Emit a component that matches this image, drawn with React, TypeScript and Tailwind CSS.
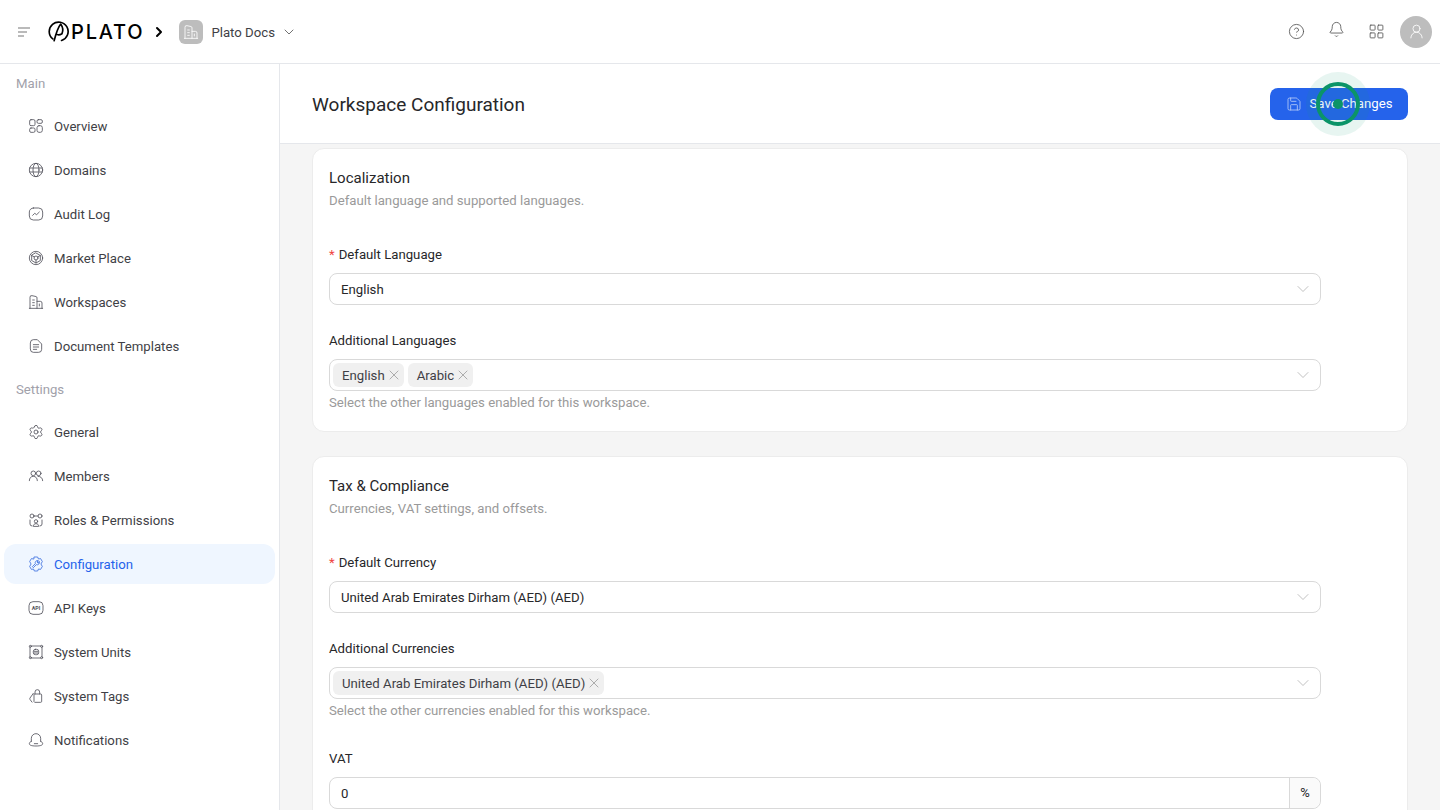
import {
  Bell,
  ChevronDown,
  ChevronRight,
  CircleHelp,
  LayoutGrid,
  Save,
  Settings,
  UserRound,
  X,
} from "lucide-react";
import type { ReactNode } from "react";

const Icon = ({ children, className = "size-4" }: { children: ReactNode; className?: string }) => (
  <svg viewBox="0 0 24 24" fill="none" stroke="currentColor" strokeWidth="1.25" strokeLinecap="round" strokeLinejoin="round" className={className}>
    {children}
  </svg>
);

const OverviewIcon = () => (
  <Icon>
    <rect x="2.5" y="2.5" width="8" height="9" rx="2" />
    <rect x="13.5" y="2.5" width="8" height="5.5" rx="2" />
    <rect x="2.5" y="15" width="8" height="6.5" rx="2" />
    <rect x="13.5" y="11.5" width="8" height="10" rx="3" />
  </Icon>
);
const DomainIcon = () => (
  <Icon>
    <circle cx="12" cy="12" r="10" />
    <ellipse cx="12" cy="12" rx="4.5" ry="10" />
    <path d="M2.5 9h19M2.5 15h19" />
  </Icon>
);
const AuditIcon = () => (
  <Icon>
    <rect x="2" y="3" width="20" height="18" rx="6" />
    <path d="M7 14l3-3 3 2 4-4" />
  </Icon>
);
const MarketIcon = () => (
  <Icon>
    <circle cx="12" cy="12" r="10" />
    <path d="M12 4.500l6.500 3.700v7.600L12 19.500l-6.500-3.700V8.200z" />
    <circle cx="12" cy="12" r="3" />
    <path d="M5.500 8.200l4 2.200M18.500 8.200l-4 2.200M12 15v4.500" />
  </Icon>
);
const WorkspaceIcon = () => (
  <Icon>
    <path d="M3 21.500V5a2.500 2.500 0 0 1 3-2.500l6 1.300a2 2 0 0 1 1.500 2V21.500" />
    <path d="M13.500 11h5a2.500 2.500 0 0 1 2.500 2.500v8M2 21.500h20M7 9h2.500M7 13h2.500M7 17h2.500M17 15v3" />
  </Icon>
);
const DocumentIcon = () => (
  <Icon>
    <path d="M3.500 7a4.500 4.500 0 0 1 4.500-4.500h6L20.500 9v8a4.500 4.500 0 0 1-4.500 4.500H8A4.500 4.500 0 0 1 3.500 17z" />
    <path d="M8 10h8M8 13.500h8M8 17h5" />
  </Icon>
);
const MembersIcon = () => (
  <Icon>
    <circle cx="8" cy="8" r="3.500" />
    <circle cx="16" cy="8" r="3.500" />
    <path d="M2 19c0-4 2.500-6.500 6-6.500s6 2.500 6 6.500M15 12.500c4 0 7 2.500 7 6.500" />
  </Icon>
);
const RolesIcon = () => (
  <Icon>
    <circle cx="6" cy="6" r="3" />
    <circle cx="18" cy="6" r="3" />
    <path d="M9 6h6M3 12v6a3 3 0 0 0 3 3M21 12v6a3 3 0 0 1-3 3" />
    <circle cx="12" cy="14" r="2.500" />
    <path d="M8 21c0-2 1.500-3.500 4-3.500s4 1.500 4 3.500z" />
  </Icon>
);
const ConfigIcon = () => (
  <Icon>
    <path d="M9.500 1.500h5l1.200 3 3.200-.6 2.600 4.400L19.400 12l2.100 3.700-2.600 4.400-3.200-.6-1.200 3h-5l-1.200-3-3.200.6-2.600-4.400L4.600 12 2.500 8.300l2.600-4.400 3.200.6z" />
    <path d="M17 8.500a3.500 3.500 0 0 1-4.500 4.500L8 17.500 6.500 16l4.500-4.500A3.500 3.500 0 0 1 15.500 7l-2 2 1.500 1.500z" />
  </Icon>
);
const ApiIcon = () => (
  <svg viewBox="0 0 24 24" fill="none" stroke="currentColor" strokeWidth="1.25" className="size-4">
    <rect x="1.500" y="2.500" width="21" height="19" rx="6" />
    <text x="12" y="15" textAnchor="middle" fontSize="8" fontWeight="700" fill="currentColor" stroke="none" fontFamily="Roboto, sans-serif">API</text>
  </svg>
);
const UnitsIcon = () => (
  <Icon>
    <path d="M5 3h14M5 21h14M3 5v14M21 5v14" />
    <circle cx="3.500" cy="3.500" r="1.500" />
    <circle cx="20.500" cy="3.500" r="1.500" />
    <circle cx="3.500" cy="20.500" r="1.500" />
    <circle cx="20.500" cy="20.500" r="1.500" />
    <rect x="8" y="8" width="8" height="8" rx="3" />
    <path d="M9 11h6M9 13.500h6" />
  </Icon>
);
const TagsIcon = () => (
  <Icon>
    <path d="M10 9h9a1.500 1.500 0 0 1 1.500 1.500V20a1.500 1.500 0 0 1-1.500 1.500H10l-1-1V10z" />
    <path d="M8 8L3 15c-.5.700-.5 1.500 0 2.200l3 4" />
    <path d="M10.500 9V6a3.500 3.500 0 0 1 7 0v3" />
  </Icon>
);
const NotifyIcon = () => (
  <Icon>
    <path d="M5 14V9.500a7 7 0 0 1 14 0V14" />
    <path d="M5 14c-2 .8-3 2-3 3.500 0 2 2.500 3.500 10 3.500s10-1.500 10-3.500c0-1.500-1-2.700-3-3.500" />
    <path d="M9.500 17.500h5" />
  </Icon>
);

const MenuItem = ({ icon, label, active }: { icon: ReactNode; label: string; active?: boolean }) => (
  <div
    className={`mx-1 w-[271px] h-10 flex items-center gap-2.5 pl-6 rounded-xl text-[13.2px] ${
      active ? "bg-[#eff6ff] text-[#2563eb]" : "text-[#3f3f46]"
    }`}
  >
    <span className={`size-4 shrink-0 ${active ? "text-[#3b6fe0]" : "text-[#52525b]"}`}>{icon}</span>
    <span className="pt-[2px]">{label}</span>
  </div>
);

const GroupLabel = ({ children }: { children: ReactNode }) => (
  <div className="h-[38px] flex items-center pl-4 pt-[2px] text-[13.2px] text-[#a1a1aa]">{children}</div>
);

const Tag = ({ label }: { label: string }) => (
  <span className="h-6 flex items-center pl-[9px] pr-[2px] rounded-md bg-[#f0f0f0] text-[13.2px] text-[#3f3f46]">
    <span className="pt-[2px]">{label}</span>
    <X className="size-4 ml-px text-[#8a8a8a]" strokeWidth={1} />
  </span>
);

const SelectBox = ({ children, tags }: { children: ReactNode; tags?: boolean }) => (
  <div className={`w-[992px] h-8 flex items-center justify-between border border-[#d9d9d9] rounded-lg bg-white pr-[7px] ${tags ? "pl-[3px]" : "pl-[11px]"}`}>
    <div className={`flex items-center gap-1 text-[13.2px] text-[#27272a] ${tags ? "" : "pt-[2px]"}`}>{children}</div>
    <ChevronDown className="size-5 text-[#b5b5b5]" strokeWidth={1} />
  </div>
);

const Field = ({ label, required, hint, children, className = "" }: { label: string; required?: boolean; hint?: string; children: ReactNode; className?: string }) => (
  <div className={`flex flex-col ${className}`}>
    <div className="h-[22px] mb-2 pt-[2px] flex items-center text-[13.2px] text-[#27272a]">
      {required && <span className="text-[#ef4444] mr-[4px]">*</span>}
      {label}
    </div>
    {children}
    {hint && <div className="mt-px h-[22px] flex items-center text-[13.2px] text-[#9a9a9a]">{hint}</div>}
  </div>
);

const Card = ({ title, sub, children }: { title: string; sub: string; children: ReactNode }) => (
  <section className="w-[1096px] shrink-0 bg-white border border-[#ececec] rounded-xl px-4 pt-[17px] pb-[17px]">
    <h2 className="h-6 flex items-center text-[15px] font-[450] text-[#27272a]">{title}</h2>
    <p className="h-[22px] flex items-center text-[13.2px] text-[#9a9a9a]">{sub}</p>
    <div className="mt-[31px] flex flex-col gap-6">{children}</div>
  </section>
);

const Logo = () => (
  <div className="flex items-center gap-[2px] text-black">
    <svg viewBox="0 0 24 24" width="21" height="21" fill="none" stroke="currentColor" strokeWidth="1.900" strokeLinecap="round" strokeLinejoin="round">
      <path d="M5.500 20.500A10.800 10.800 0 1 1 15.500 22.300" />
      <path d="M7 22.500C9 15 11 8 14.500 3.500 17 7 17.500 11 16 14.500 13.500 16 11 16 9.500 15" />
    </svg>
    <span className="font-['Inter',sans-serif] text-[20px] leading-none font-medium tracking-[1.8px]">PLATO</span>
  </div>
);

export default function App() {
  return (
    <div className="w-[1440px] h-[810px] overflow-hidden flex flex-col bg-white font-['Roboto',sans-serif]">
      <header className="h-16 shrink-0 flex items-center border-b border-[#e5e7eb] pl-[18px] pr-2">
        <svg viewBox="0 0 13 10" width="13" height="10" fill="none" stroke="#777" strokeWidth="1.200" className="mr-[17px]">
          <path d="M0 1h12M0 5h9M0 9h6" />
        </svg>
        <Logo />
        <ChevronRight className="size-4 text-black ml-[7px]" strokeWidth={3} />
        <div className="ml-[12px] size-6 rounded-md bg-[#bdbdbd] flex items-center justify-center text-white">
          <WorkspaceIcon />
        </div>
        <span className="ml-2 pt-[2px] text-[13.2px] text-[#3f3f46]">Plato Docs</span>
        <ChevronDown className="ml-[6px] size-4 text-[#555]" strokeWidth={1.25} />
        <div className="ml-auto flex items-center text-[#555]">
          <CircleHelp className="size-[17px]" strokeWidth={1.2} />
          <Bell className="size-[17px] ml-[23px] -mt-1" strokeWidth={1.2} />
          <LayoutGrid className="size-[17px] ml-[23px]" strokeWidth={1.2} />
          <div className="ml-[15px] size-8 rounded-full bg-[#bdbdbd] flex items-center justify-center text-white">
            <UserRound className="size-[17px]" strokeWidth={1.2} />
          </div>
        </div>
      </header>
      <div className="flex-1 min-h-0 flex">
        <aside className="w-[280px] shrink-0 border-r border-[#e5e7eb] flex flex-col gap-1">
          <GroupLabel>Main</GroupLabel>
          <MenuItem icon={<OverviewIcon />} label="Overview" />
          <MenuItem icon={<DomainIcon />} label="Domains" />
          <MenuItem icon={<AuditIcon />} label="Audit Log" />
          <MenuItem icon={<MarketIcon />} label="Market Place" />
          <MenuItem icon={<WorkspaceIcon />} label="Workspaces" />
          <MenuItem icon={<DocumentIcon />} label="Document Templates" />
          <GroupLabel>Settings</GroupLabel>
          <MenuItem icon={<Settings className="size-4" strokeWidth={1.25} />} label="General" />
          <MenuItem icon={<MembersIcon />} label="Members" />
          <MenuItem icon={<RolesIcon />} label="Roles &amp; Permissions" />
          <MenuItem icon={<ConfigIcon />} label="Configuration" active />
          <MenuItem icon={<ApiIcon />} label="API Keys" />
          <MenuItem icon={<UnitsIcon />} label="System Units" />
          <MenuItem icon={<TagsIcon />} label="System Tags" />
          <MenuItem icon={<NotifyIcon />} label="Notifications" />
        </aside>
        <main className="flex-1 min-w-0 flex flex-col bg-[#f5f5f5]">
          <div className="h-20 shrink-0 bg-white border-b border-[#e5e7eb] flex items-center justify-between pl-8 pr-8">
            <h1 className="pt-[3px] text-[19px] font-[450] text-[#27272a]">Workspace Configuration</h1>
            <div className="relative">
              <button className="w-[138px] h-8 flex items-center justify-center gap-2 rounded-lg bg-[#2563eb] text-[13.2px] text-white">
                <Save className="size-4 text-[#b9cdf8]" strokeWidth={1.25} />
                <span className="pt-px">Save Changes</span>
              </button>
              <div className="absolute left-9 -top-4 size-16 rounded-full bg-[#0f9d76]/10 flex items-center justify-center">
                <div className="size-11 rounded-full border-4 border-[#0b9468] flex items-center justify-center">
                  <div className="size-2.5 rounded-full bg-[#0b9468]" />
                </div>
              </div>
            </div>
          </div>
          <div className="flex-1 min-h-0 overflow-hidden flex flex-col gap-6 pl-8 pt-1">
            <Card title="Localization" sub="Default language and supported languages.">
              <Field label="Default Language" required>
                <SelectBox>English</SelectBox>
              </Field>
              <Field label="Additional Languages" hint="Select the other languages enabled for this workspace.">
                <SelectBox tags>
                  <Tag label="English" />
                  <Tag label="Arabic" />
                </SelectBox>
              </Field>
            </Card>
            <Card title="Tax &amp; Compliance" sub="Currencies, VAT settings, and offsets.">
              <Field label="Default Currency" required>
                <SelectBox>United Arab Emirates Dirham (AED) (AED)</SelectBox>
              </Field>
              <Field label="Additional Currencies" hint="Select the other currencies enabled for this workspace.">
                <SelectBox tags>
                  <Tag label="United Arab Emirates Dirham (AED) (AED)" />
                </SelectBox>
              </Field>
              <Field label="VAT" className="mt-px">
                <div className="w-[992px] h-8 flex border border-[#d9d9d9] rounded-lg bg-white text-[13.2px] text-[#27272a]">
                  <div className="flex-1 flex items-center pl-[11px] pt-[2px]">0</div>
                  <div className="w-[31px] flex items-center justify-center border-l border-[#d9d9d9] bg-[#fafafa] rounded-r-lg text-[13px]">%</div>
                </div>
              </Field>
            </Card>
          </div>
        </main>
      </div>
    </div>
  );
}
